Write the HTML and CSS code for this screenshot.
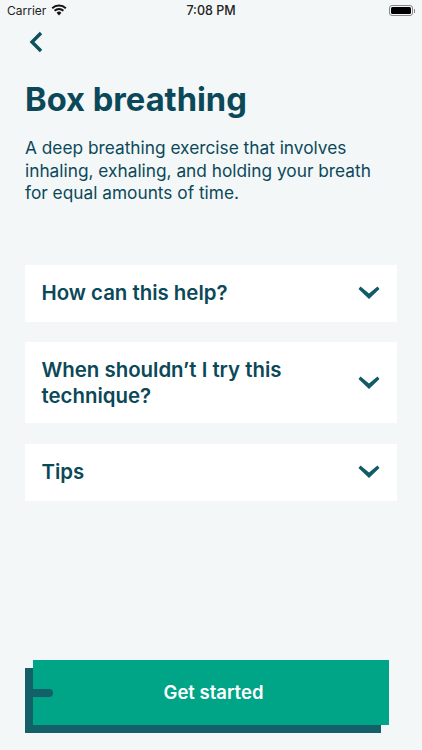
FILE: index.html
```html
<!DOCTYPE html>
<html lang="en">
<head>
<meta charset="utf-8">
<title>Box breathing</title>
<link rel="stylesheet" href="styles.css">
</head>
<body>
<div class="screen">
  <div class="status">
    <div class="status-left">
      <span>Carrier</span>
      <svg class="wifi" width="16" height="12" viewBox="0 0 16 12"><path d="M8 11.5 5.6 8.8a3.4 3.4 0 0 1 4.8 0Z" fill="#111"/><path d="M3.6 6.8a6.3 6.3 0 0 1 8.8 0" fill="none" stroke="#111" stroke-width="1.9"/><path d="M1.2 4.2a9.8 9.8 0 0 1 13.6 0" fill="none" stroke="#111" stroke-width="1.9"/></svg>
    </div>
    <div class="status-time">7:08 PM</div>
    <div class="status-right">
      <span class="battery"><span class="battery-fill"></span></span><span class="battery-tip"></span>
    </div>
  </div>
  <main class="content">
    <button class="back" aria-label="Back">
      <svg width="16" height="22" viewBox="0 0 16 22"><path d="M13 2 4 11l9 9" fill="none" stroke="#0d4f5c" stroke-width="3.4"/></svg>
    </button>
    <h1 class="title">Box breathing</h1>
    <p class="intro">A deep breathing exercise that involves inhaling, exhaling, and holding your breath for equal amounts of time.</p>
    <div class="accordion">
      <div class="item"><span class="item-label">How can this help?</span><svg class="chev" width="22" height="14" viewBox="0 0 22 14"><path d="M0.5 3 2.5 .5 11 7.6 19.5 .5 21.5 3 11 13Z" fill="#125a66"/></svg></div>
      <div class="item"><span class="item-label">When shouldn’t I try this technique?</span><svg class="chev" width="22" height="14" viewBox="0 0 22 14"><path d="M0.5 3 2.5 .5 11 7.6 19.5 .5 21.5 3 11 13Z" fill="#125a66"/></svg></div>
      <div class="item"><span class="item-label">Tips</span><svg class="chev" width="22" height="14" viewBox="0 0 22 14"><path d="M0.5 3 2.5 .5 11 7.6 19.5 .5 21.5 3 11 13Z" fill="#125a66"/></svg></div>
    </div>
  </main>
  <div class="cta-wrap">
    <div class="cta-shadow"></div>
    <div class="cta-nub"></div>
    <button class="cta">Get started</button>
  </div>
</div>
</body>
</html>
```

FILE: styles.css
```css
* { box-sizing: border-box; }
html, body { margin: 0; padding: 0; }
body { background: #f3f7f8; font-family: Inter, "Noto Sans", sans-serif; color: #0b4858; }
.screen { width: 422px; height: 750px; display: flex; flex-direction: column; overflow: hidden; }
.status { height: 20px; display: grid; grid-template-columns: 1fr auto 1fr; align-items: center; padding: 1px 7px 0; font-family: Inter, "Liberation Sans", sans-serif; font-size: 12px; color: #222; }
.status-left { display: flex; align-items: center; gap: 5px; }
.wifi { margin-top: -2px; }
.status-time { font-weight: 500; font-size: 12.5px; }
.status-right { display: flex; justify-content: flex-end; align-items: center; }
.battery { width: 24px; height: 11px; border: 1px solid #888; border-radius: 3px; padding: 1px; display: block; }
.battery-fill { display: block; width: 100%; height: 100%; background: #000; border-radius: 1.5px; }
.battery-tip { width: 1px; height: 4px; background: #888; margin-left: 1px; }
.content { flex: 1; padding: 0 25px; display: flex; flex-direction: column; }
.back { background: none; border: 0; padding: 0; margin: 11px 0 0 3px; width: 16px; height: 22px; display: block; }
.title { margin: 26px 0 0; font-size: 32.7px; line-height: 40px; font-weight: 700; color: #0b4858; }
.intro { margin: 18px 0 0; font-size: 17.3px; line-height: 22.5px; color: #0b4858; }
.accordion { margin-top: 60px; display: flex; flex-direction: column; gap: 20.5px; }
.item { background: #fff; min-height: 57px; padding: 15px 17px 15px 16.5px; display: flex; align-items: center; justify-content: space-between; gap: 30px; }
.item-label { font-size: 20.4px; line-height: 25.5px; font-weight: 600; color: #0b4858; }
.chev { flex: none; }
.cta-wrap { position: relative; height: 90px; margin: 0 25px; flex: none; }
.cta-shadow { position: absolute; left: 0; top: 8px; width: 356px; height: 65px; background: #136069; }
.cta-nub { position: absolute; z-index: 2; left: 8px; top: 29px; width: 20px; height: 8px; background: #136069; border-radius: 0 4px 4px 0; }
.cta { position: absolute; z-index: 1; left: 8px; top: 0; width: 356px; height: 65px; border: 0; background: #00a587; color: #fff; font-family: Inter, "Noto Sans", sans-serif; font-size: 18.5px; font-weight: 600; padding: 0 0 2px 5px; }
```
